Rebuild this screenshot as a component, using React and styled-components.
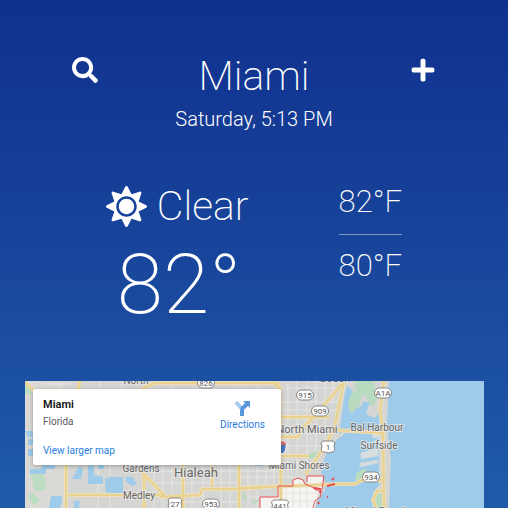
import React from 'react';
import styled, { createGlobalStyle } from 'styled-components';
import { FaSearch, FaPlus, FaSun } from 'react-icons/fa';

const GlobalStyle = createGlobalStyle`
  * { box-sizing: border-box; }
  body { margin: 0; font-family: Roboto, "Liberation Sans", sans-serif; }
`;

const Page = styled.main`
  display: flex;
  flex-direction: column;
  height: 100vh;
  padding: 48px 24px 0;
  overflow: hidden;
  color: #fff;
  background: linear-gradient(#10308e, #205ba9);
`;

const Header = styled.header`
  display: flex;
  align-items: flex-start;
  justify-content: space-between;
  padding: 0 48px;
`;

const IconButton = styled.button`
  display: flex;
  margin-top: 9px;
  padding: 0;
  border: 0;
  background: none;
  color: inherit;
  font-size: 26px;
  cursor: pointer;
`;

const Place = styled.div`
  text-align: center;
`;

const City = styled.h1`
  margin: 0;
  font-size: 41px;
  font-weight: 200;
  line-height: 56px;
`;

const LocalTime = styled.p`
  margin: 0;
  font-size: 20px;
  font-weight: 300;
  line-height: 30px;
`;

const Weather = styled.section`
  display: flex;
  justify-content: center;
  gap: 90px;
  height: 197px;
  margin-top: 50px;
`;

const Condition = styled.div`
  display: flex;
  align-items: center;
  gap: 10px;
  font-size: 41px;
  font-weight: 200;
  line-height: 44px;
`;

const Temperature = styled.p`
  margin: 7px 0 0;
  padding-left: 11px;
  font-size: 84px;
  font-weight: 200;
  line-height: 100px;
`;

const Range = styled.div`
  font-size: 31px;
  font-weight: 200;
  line-height: 36px;
`;

const RangeValue = styled.p`
  margin: 0;
  & + & {
    margin-top: 14px;
    padding-top: 13px;
    border-top: 1px solid rgba(255, 255, 255, 0.45);
  }
`;

const MapFrame = styled.section`
  position: relative;
  flex: 1;
  margin: 0 0 0 1px;
  overflow: hidden;
  background: #9dcbe9;
`;

const MapDrawing = styled.svg`
  display: block;
  width: 100%;
  height: 100%;
`;

const MapCard = styled.aside`
  position: absolute;
  top: 8px;
  left: 8px;
  display: flex;
  justify-content: space-between;
  width: 248px;
  padding: 8px 16px 7px 10px;
  border-radius: 2px;
  background: #fff;
  box-shadow: 0 1px 4px rgba(0, 0, 0, 0.3);
  font-size: 10px;
`;

const CardTitle = styled.h2`
  margin: 0;
  color: #111;
  font-size: 11px;
  font-weight: 600;
  line-height: 16px;
`;

const CardRegion = styled.p`
  margin: 0 0 14px;
  color: #5b5b5b;
  line-height: 17px;
`;

const CardLink = styled.a`
  display: block;
  color: #2b7de0;
  line-height: 14px;
  text-decoration: none;
`;

const Directions = styled(CardLink)`
  display: flex;
  flex-direction: column;
  align-items: center;
  padding-top: 3px;
`;

const towns = [
  { name: 'North', x: 136, y: 384, size: 10 },
  { name: 'Beach', x: 335, y: 382, size: 11 },
  { name: 'North Miami', x: 307, y: 433, size: 11 },
  { name: 'Bal Harbour', x: 377, y: 431, size: 10 },
  { name: 'Surfside', x: 379, y: 449, size: 10 },
  { name: 'Miami Shores', x: 299, y: 469, size: 10 },
  { name: 'Gardens', x: 141, y: 472, size: 10 },
  { name: 'Hialeah', x: 196, y: 477, size: 13 },
  { name: 'Medley', x: 139, y: 499, size: 10 },
  { name: 'Miami Beach', x: 377, y: 515, size: 11 },
];

const shields = [
  { label: '826', x: 206, y: 383 },
  { label: '915', x: 305, y: 395 },
  { label: '909', x: 320, y: 411 },
  { label: 'A1A', x: 383, y: 393 },
  { label: '934', x: 371, y: 477 },
  { label: '953', x: 211, y: 504 },
  { label: '1', x: 328, y: 447, us: true },
  { label: '27', x: 175, y: 504, us: true },
  { label: '441', x: 280, y: 506, us: true },
];

const yellowRoads = [
  'M25 382L34 391L44 398', 'M80 381L77 392', 'M138 394Q147 383 158 383H274L281 389',
  'M66 460V508', 'M68 495H165', 'M138 468L164 495', 'M144 475V508', 'M183 460V508',
  'M160 497L200 495L202 489H240L265 487', 'M239 460V508', 'M212 464V486',
  'M277 381L280 393L281 508', 'M281 417H329', 'M281 437H298L304 426', 'M281 456H309',
  'M240 488L340 484H355L362 480H383', 'M342 384L314 417L304 426',
  'M344 381L338 410L334 430L319 455L306 474', 'M335 430L383 433',
  'M384 381L380 410L383 433L384 508', 'M384 491H377L373 500L376 508',
];

const whiteStreets = [
  'M98 460V508', 'M110 460V476M110 495V508', 'M122 484H98', 'M154 460V508', 'M163 460V508', 'M172 460V494',
  'M192 481V508', 'M203 460V508', 'M221 460V508', 'M230 460V508', 'M248 460V508', 'M257 460V508', 'M266 460V490',
  'M274 460V486', 'M150 471H281', 'M155 483H240', 'M183 502H240', 'M240 477H310', 'M246 497H262',
  'M288 381V476', 'M297 381V476', 'M307 381V474', 'M316 381V452', 'M325 381V440', 'M333 381V405',
  'M281 402H340', 'M281 410H337', 'M286 388H346', 'M281 446H322', 'M281 463H313', 'M45 384H72M60 381V391M100 381V391M122 381V391M172 385V391M240 385V391M258 385V391',
];

const Shield = ({ label, x, y, us }) => {
  const w = us && label.length < 3 ? 14 : 17;
  const left = x - w / 2;
  const right = x + w / 2;
  return (
    <g>
      {us ? (
        <path
          d={`M${left} ${y - 4}L${left + 2} ${y - 6}H${right - 2}L${right} ${y - 4}L${right - 1} ${y - 1}Q${right + 1} ${y + 5} ${x + 4} ${y + 5}L${x} ${y + 6}L${x - 4} ${y + 5}Q${left - 1} ${y + 5} ${left + 1} ${y - 1}Z`}
          fill="#fff" stroke="#858585"
        />
      ) : (
        <rect x={left} y={y - 5} width={w} height="10" rx="5" fill="#fff" stroke="#858585" />
      )}
      <text x={x} y={y + 3} fontSize="8" textAnchor="middle" fill="#555">{label}</text>
    </g>
  );
};

const MiamiMap = () => (
  <MapDrawing viewBox="25 381 459 127" preserveAspectRatio="xMinYMin slice" role="img" aria-label="Map of Miami">
    <rect x="25" y="381" width="459" height="127" fill="#9dcbe9" />
    <path d="M25 381H389L387 425L391 460L389 508H373V493L379 485V435L373 431L360 429L350 430L338 439L330 448L324 459L321 472L325 482L325 490L318 499L315 508H25Z" fill="#d5d5d3" />
    <path d="M25 381H66V508H25Z" fill="#dad9d5" />
    <g fill="none" stroke="#e5e5e4" strokeWidth="1">
      {whiteStreets.map((d) => <path key={d} d={d} />)}
    </g>
    <path d="M347 386L353 391L349 401L360 408L363 402L370 402L366 414L375 418L381 410L379 430L351 429L339 434L342 415L344 398Z" fill="#9dcbe9" />
    <path d="M351 394L361 389L362 397L359 406L351 414L348 405ZM356 381H374L377 400L372 407L365 396L354 389ZM309 454L318 451L315 457L309 459Z" fill="#b8dbbf" />
    <path d="M31 475L43 472L47 489L35 492ZM27 496L33 493L40 501L34 506ZM25 383L38 394H25Z" fill="#bdddc2" />
    <path d="M25 431H34V437H28ZM28 439H33V445H28ZM28 449H34V456H28ZM30 469H46V474H30ZM42 463H55V469H42ZM51 496H62V501L60 508H49ZM79 466L83 469L81 479L72 479ZM88 465H94V475L103 477V484H88ZM105 479L110 477H123V493H106ZM126 477H132L137 484L131 486L126 481ZM74 501H80L79 508H74ZM98 464H104V469H98ZM147 467H155V470H147ZM255 464H263V466H255Z" fill="#9dcbe9" />
    <path d="M243 493L248 498L246 500L241 496ZM252 500H257V503H252Z" fill="#b8dbbf" />
    <path d="M300 399L305 425L298 447M301 417L312 436L309 450M300 425L312 440" fill="none" stroke="#d0dde2" strokeWidth="1" />
    <path d="M260 508V497H278V486H293V480L298 478L303 480L307 485L308 476H323L322 490L318 494L315 508Z" fill="#f6f4f1" />
    <path d="M286 486V508M293 486V508M300 481V508M307 486V508M284 493H318M284 501H317" stroke="#e3e2df" />
    <path d="M361 453L378 448V456L361 459ZM360 463L378 460V463L360 467ZM372 433H380V438H373ZM374 441L380 440V444H375Z" fill="#d9dddd" stroke="#c4d9e3" />
    <path d="M378 493Q372 497 376 508H382V493ZM357 472L367 468L364 480H355Z" fill="#b8dbbf" />
    <g fill="none" strokeLinejoin="round">
      {yellowRoads.map((d) => <path key={d} d={d} stroke="#ecdfb9" strokeWidth="4" />)}
      {yellowRoads.map((d) => <path key={d} d={d} stroke="#e9d18e" strokeWidth="2" />)}
    </g>
    <path d="M260 508V497H278V486H293V480L298 478L303 480L305 484M307 482V476H324L322 490M305 484L312 487L320 489M313 488L320 492L321 496L315 501L313 508" fill="none" stroke="#e75355" strokeWidth="1" />
    <path d="M314 488L320 489L321 493M327 486L335 484M332 480L334 478M327 497H328M318 502L319 504" fill="none" stroke="#e44b4e" strokeWidth="2" />
    <path d="M278 443L282 441L286 443Q287 452 282 454Q277 451 278 443Z" fill="#4779bd" stroke="#fff" />
    <path d="M278 443L282 441L286 443V445H278Z" fill="#d66a68" />
    {shields.map((shield) => <Shield key={shield.label} {...shield} />)}
    <g textAnchor="middle" fill="#666" stroke="#ececec" strokeWidth="2" strokeOpacity="0.7" paintOrder="stroke">
      {towns.map(({ name, x, y, size }) => <text key={name} x={x} y={y} fontSize={size}>{name}</text>)}
    </g>
  </MapDrawing>
);

const DirectionsIcon = () => (
  <svg width="18" height="18" viewBox="0 0 18 18" aria-hidden="true">
    <path d="M2 2L7 8" fill="none" stroke="#a8cbf0" strokeWidth="4" />
    <path d="M8 16V11Q8 8 10 7L13 4" fill="none" stroke="#5697de" strokeWidth="4" />
    <path d="M9 1H16V8Z" fill="#5697de" />
  </svg>
);

export default function App() {
  return (
    <Page>
      <GlobalStyle />
      <Header>
        <IconButton type="button" aria-label="Search"><FaSearch /></IconButton>
        <Place>
          <City>Miami</City>
          <LocalTime>Saturday, 5:13 PM</LocalTime>
        </Place>
        <IconButton type="button" aria-label="Add city"><FaPlus /></IconButton>
      </Header>
      <Weather>
        <div>
          <Condition><FaSun aria-hidden="true" />Clear</Condition>
          <Temperature>82°</Temperature>
        </div>
        <Range>
          <RangeValue>82°F</RangeValue>
          <RangeValue>80°F</RangeValue>
        </Range>
      </Weather>
      <MapFrame>
        <MiamiMap />
        <MapCard>
          <div>
            <CardTitle>Miami</CardTitle>
            <CardRegion>Florida</CardRegion>
            <CardLink href="#map">View larger map</CardLink>
          </div>
          <Directions href="#directions"><DirectionsIcon />Directions</Directions>
        </MapCard>
      </MapFrame>
    </Page>
  );
}
